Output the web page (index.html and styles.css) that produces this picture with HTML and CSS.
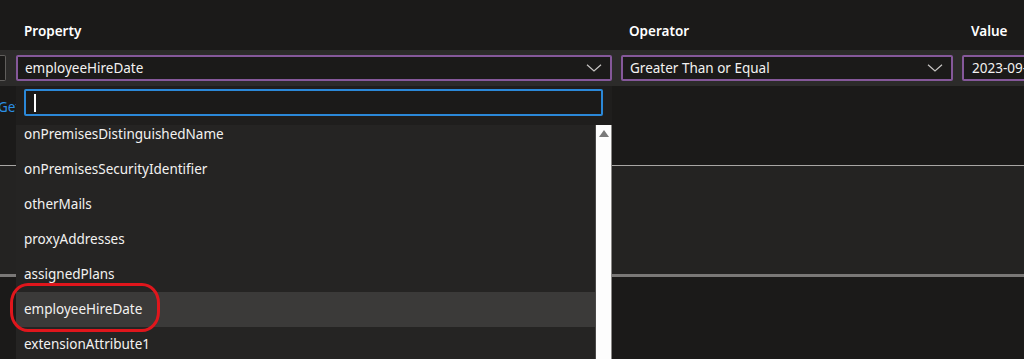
FILE: index.html
```html
<!DOCTYPE html>
<html>
<head>
<meta charset="utf-8">
<link rel="stylesheet" href="styles.css">
</head>
<body>
<div class="page">
  <div class="labels">
    <span></span>
    <span class="label">Property</span>
    <span class="label">Operator</span>
    <span class="label label-value">Value</span>
  </div>
  <div class="row">
    <div class="stub"></div>
    <div class="select">
      <span class="select-text">employeeHireDate</span>
      <svg class="chev" width="16" height="8" viewBox="0 0 16 8"><path d="M1 0.8 L8 7 L15 0.8" fill="none" stroke="#c8c6c4" stroke-width="1.2"/></svg>
    </div>
    <div class="select">
      <span class="select-text">Greater Than or Equal</span>
      <svg class="chev" width="16" height="8" viewBox="0 0 16 8"><path d="M1 0.8 L8 7 L15 0.8" fill="none" stroke="#c8c6c4" stroke-width="1.2"/></svg>
    </div>
    <div class="select value-input"><span class="select-text">2023-09-01</span></div>
  </div>
  <div class="link">Get custom extension properties</div>
  <div class="section"></div>

  <div class="dropdown">
    <div class="search"><span class="caret"></span></div>
    <div class="list-wrap">
      <div class="list">
        <div class="list-inner">
          <div class="item">onPremisesDistinguishedName</div>
          <div class="item">onPremisesSecurityIdentifier</div>
          <div class="item">otherMails</div>
          <div class="item">proxyAddresses</div>
          <div class="item">assignedPlans</div>
          <div class="item item-active">employeeHireDate</div>
          <div class="item">extensionAttribute1</div>
        </div>
      </div>
      <div class="scrollbar"><span class="arrow-up"></span></div>
    </div>
  </div>

  <div class="annot"></div>
</div>
</body>
</html>
```

FILE: styles.css
```css
html, body {
  margin: 0;
  padding: 0;
  background: #1b1a19;
}

body {
  font-family: "Noto Sans", "Open Sans", sans-serif;
  font-size: 13.5px;
  color: #f3f2f1;
}

.page {
  position: relative;
  width: 1024px;
  height: 359px;
  overflow: hidden;
}

.labels {
  display: grid;
  grid-template-columns: 7px 596px 332px 140px;
  column-gap: 9px;
  height: 50px;
  box-sizing: border-box;
  padding-top: 21px;
  line-height: 20px;
}

.label {
  font-weight: 600;
  padding-left: 8px;
  color: #ffffff;
}

.label-value {
  padding-left: 9px;
}

.row {
  display: grid;
  grid-template-columns: 7px 596px 332px 140px;
  column-gap: 9px;
  background: #2c2b2a;
  padding: 5px 0;
  height: 36px;
  box-sizing: border-box;
}

.stub {
  width: 6px;
  height: 26px;
  box-sizing: border-box;
  border: 1px solid #605e5c;
  border-left: none;
  border-radius: 0 2px 2px 0;
  background: #1b1a19;
}

.select {
  display: flex;
  align-items: center;
  justify-content: space-between;
  height: 26px;
  box-sizing: border-box;
  border: 2px solid #85589a;
  border-radius: 2px;
  background: #1b1a19;
  padding: 0 6px 0 7px;
}

.select-text {
  line-height: 20px;
  white-space: nowrap;
}

.value-input {
  padding-left: 8px;
}

.chev {
  display: block;
  margin-right: 2px;
}

.link {
  margin-top: 11px;
  margin-left: -2px;
  line-height: 20px;
  color: #2b8fe4;
  white-space: nowrap;
}

.section {
  margin-top: 48px;
  height: 108px;
  background: #242322;
  border-top: 1px solid #a8a6a4;
  border-bottom: 3px solid #7a7877;
}

.dropdown {
  position: absolute;
  left: 16px;
  top: 86px;
  width: 596px;
  bottom: 0;
  background: #1f1e1d;
  display: flex;
  flex-direction: column;
}

.search {
  margin: 3px 9px 9px 8px;
  height: 27px;
  box-sizing: border-box;
  border: 2px solid #2b88d8;
  border-radius: 2px;
  background: #1b1a19;
  display: flex;
  align-items: center;
  padding-left: 8px;
}

.caret {
  display: block;
  width: 1.5px;
  height: 18px;
  background: #ffffff;
}

.list-wrap {
  flex: 1;
  display: flex;
  min-height: 0;
  background: #252423;
}

.list {
  flex: 1;
  overflow: hidden;
}

.list-inner {
  margin-top: -8px;
}

.item {
  height: 35px;
  line-height: 35px;
  padding-left: 8px;
  color: #f3f2f1;
  white-space: nowrap;
}

.item-active {
  background: #3b3a39;
}

.scrollbar {
  width: 17px;
  box-sizing: border-box;
  background: #fdfdfd;
  border-left: 1px solid #4a4948;
  border-right: 1px solid #8a8886;
  display: flex;
  justify-content: center;
}

.arrow-up {
  display: block;
  width: 0;
  height: 0;
  margin-top: 5px;
  border-left: 5px solid transparent;
  border-right: 5px solid transparent;
  border-bottom: 7px solid #7a7a7a;
}

.annot {
  position: absolute;
  left: 10px;
  top: 283px;
  width: 150px;
  height: 49px;
  box-sizing: border-box;
  border: 3px solid #e0161c;
  border-radius: 18px / 20px;
}
```
